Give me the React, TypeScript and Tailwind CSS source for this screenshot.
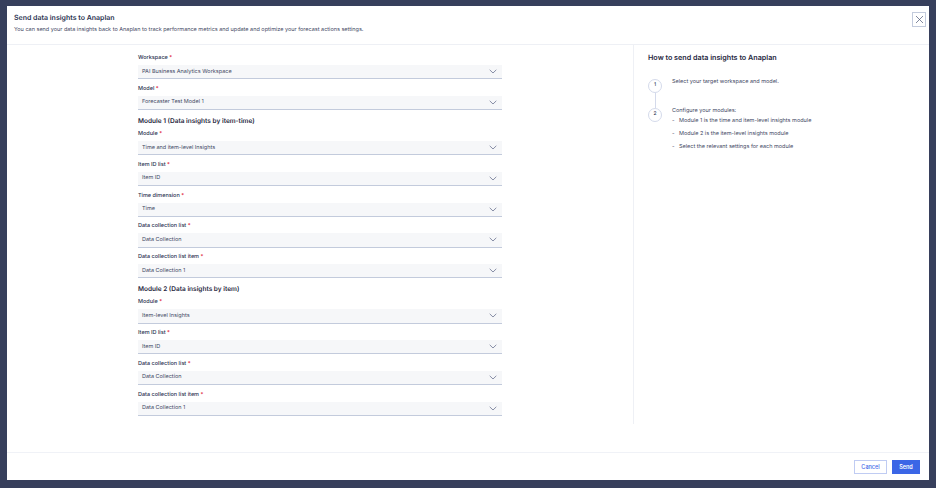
import React from "react";

const font = { fontFamily: '"Inter", "Liberation Sans", sans-serif' };

function Chevron() {
  return (
    <svg width="8" height="5" viewBox="0 0 8 5" fill="none" className="shrink-0">
      <path d="M0.7 0.8 L4 4 L7.3 0.8" stroke="#6b7490" strokeWidth="0.8" />
    </svg>
  );
}

function Field({ label, value }: { label: string; value: string }) {
  return (
    <div className="flex flex-col h-[30.75px]">
      <div className="h-[14px] pt-[3px] text-[5.5px] leading-[9px] font-medium text-[#2b3350]">
        {label} <span className="text-[#e0263c]">*</span>
      </div>
      <div className="h-[14.25px] flex items-center justify-between pl-[4px] pr-[5px] bg-[#f6f7f9] border-b border-[#c3cbdc] text-[5.5px] text-[#3f4864]">
        <span>{value}</span>
        <Chevron />
      </div>
    </div>
  );
}

function Heading({ children }: { children: React.ReactNode }) {
  return (
    <div className="h-[14.5px] pt-[3px] text-[6.5px] leading-[10px] font-semibold text-[#1f2740]">{children}</div>
  );
}

function Step({ n }: { n: number }) {
  return (
    <div className="w-[14px] h-[14px] rounded-full border border-[#d4daeb] flex items-center justify-center text-[5px] font-medium text-[#2b3350] bg-white">
      {n}
    </div>
  );
}

function Bullet({ children }: { children: React.ReactNode }) {
  return (
    <div className="flex h-[13px] items-center text-[5.5px] text-[#3f4864]">
      <span className="w-[7px]">-</span>
      <span>{children}</span>
    </div>
  );
}

export default function App() {
  return (
    <div style={font} className="w-[936px] h-[488px] bg-[#373f5c] pt-[6px] pl-[7px] overflow-hidden opacity-[0.995] antialiased [text-rendering:geometricPrecision]">
      <div className="w-[922px] h-[474px] bg-white flex flex-col">
        <header className="h-[39px] shrink-0 border-b border-[#eef0f5] flex justify-between pl-[7px] pr-[3px]">
          <div>
            <div className="mt-[7px] text-[7px] leading-[10px] font-semibold text-[#2b3350]">Send data insights to Anaplan</div>
            <div className="mt-[3px] text-[5.5px] leading-[9px] text-[#3f4864]">
              You can send your data insights back to Anaplan to track performance metrics and update and optimize your forecast actions settings.
            </div>
          </div>
          <button className="mt-[6px] w-[14px] h-[15px] border border-[#c3cbdc] flex items-center justify-center">
            <svg width="9" height="9" viewBox="0 0 9 9" fill="none">
              <path d="M1 1 L8 8 M8 1 L1 8" stroke="#4a5572" strokeWidth="0.7" />
            </svg>
          </button>
        </header>
        <main className="flex-1 flex min-h-0">
          <section className="w-[627px] h-[379px] shrink-0 border-r border-[#eef0f5] pl-[131px] pt-[6px]">
            <div className="w-[364px]">
              <Field label="Workspace" value="PAI Business Analytics Workspace" />
              <Field label="Model" value="Forecaster Test Model 1" />
              <Heading>Module 1 (Data insights by item-time)</Heading>
              <Field label="Module" value="Time and item-level Insights" />
              <Field label="Item ID list" value="Item ID" />
              <Field label="Time dimension" value="Time" />
              <Field label="Data collection list" value="Data Collection" />
              <Field label="Data collection list item" value="Data Collection 1" />
              <Heading>Module 2 (Data insights by item)</Heading>
              <Field label="Module" value="Item-level Insights" />
              <Field label="Item ID list" value="Item ID" />
              <Field label="Data collection list" value="Data Collection" />
              <Field label="Data collection list item" value="Data Collection 1" />
            </div>
          </section>
          <aside className="flex-1 pl-[14px] pt-[8px]">
            <div className="text-[7.2px] leading-[10px] font-semibold text-[#1f2740]">How to send data insights to Anaplan</div>
            <div className="flex mt-[15px]">
              <div className="w-[24px] shrink-0 flex flex-col items-start pt-px">
                <Step n={1} />
                <div className="w-px h-[15px] bg-[#d4daeb] ml-[6.5px]" />
                <Step n={2} />
              </div>
              <div>
                <div className="text-[5.5px] leading-[9px] text-[#3f4864]">Select your target workspace and model.</div>
                <div className="mt-[20px] mb-[-1px] text-[5.5px] leading-[9px] text-[#3f4864]">Configure your modules:</div>
                <Bullet>Module 1 is the time and item-level insights module</Bullet>
                <Bullet>Module 2 is the item-level insights module</Bullet>
                <Bullet>Select the relevant settings for each module</Bullet>
              </div>
            </div>
          </aside>
        </main>
        <footer className="h-[28px] shrink-0 border-t border-[#f0f2f7] flex items-center justify-end gap-[5px] pr-[9px] pt-[1px]">
          <button className="w-[33px] h-[14px] border border-[#c0ccf3] text-[5.5px] font-medium text-[#3f68e8] bg-white">Cancel</button>
          <button className="w-[28px] h-[14px] bg-[#3b66e6] text-[5.5px] font-semibold text-white">Send</button>
        </footer>
      </div>
    </div>
  );
}
